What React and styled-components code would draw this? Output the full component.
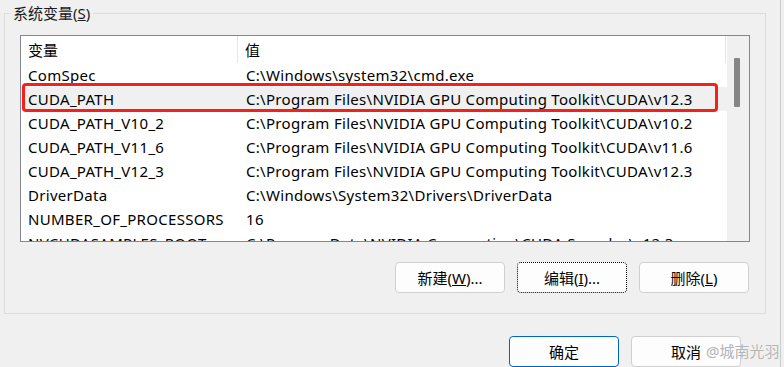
import React from "react";
import styled, { createGlobalStyle } from "styled-components";

const GlobalStyle = createGlobalStyle`
  html, body {
    margin: 0;
    padding: 0;
    background: #f0f0f0;
  }
  body {
    font-family: "Noto Sans", "Noto Sans CJK SC", sans-serif;
    font-size: 15px;
    color: #000;
  }
`;

const rows = [
  ["ComSpec", "C:\\Windows\\system32\\cmd.exe"],
  ["CUDA_PATH", "C:\\Program Files\\NVIDIA GPU Computing Toolkit\\CUDA\\v12.3", true],
  ["CUDA_PATH_V10_2", "C:\\Program Files\\NVIDIA GPU Computing Toolkit\\CUDA\\v10.2"],
  ["CUDA_PATH_V11_6", "C:\\Program Files\\NVIDIA GPU Computing Toolkit\\CUDA\\v11.6"],
  ["CUDA_PATH_V12_3", "C:\\Program Files\\NVIDIA GPU Computing Toolkit\\CUDA\\v12.3"],
  ["DriverData", "C:\\Windows\\System32\\Drivers\\DriverData"],
  ["NUMBER_OF_PROCESSORS", "16"],
  ["NVCUDASAMPLES_ROOT", "C:\\ProgramData\\NVIDIA Corporation\\CUDA Samples\\v12.3"],
];

function App() {
  return (
    <Window>
      <GlobalStyle />
      <Main>
        <GroupBox>
          <Legend>
            系统变量(<u>S</u>)
          </Legend>
          <ListBox>
            <ListBody>
              <HeaderRow>
                <HeadCell $width="217px">变量</HeadCell>
                <HeadCell $last>值</HeadCell>
              </HeaderRow>
              {rows.map(([name, value, selected]) => (
                <Row key={name} $selected={selected}>
                  <Cell $width="217px">{name}</Cell>
                  <Cell>{value}</Cell>
                </Row>
              ))}
              <Highlight />
            </ListBody>
            <ScrollTrack>
              <Thumb />
            </ScrollTrack>
          </ListBox>
          <ButtonRow>
            <Button>
              新建(<u>W</u>)...
            </Button>
            <Button $focused>
              编辑(<u>I</u>)...
            </Button>
            <Button>
              删除(<u>L</u>)
            </Button>
          </ButtonRow>
        </GroupBox>
        <DialogButtons>
          <Button $primary>确定</Button>
          <Button>取消</Button>
          <Watermark>@城南光羽</Watermark>
        </DialogButtons>
      </Main>
      <EdgeLine />
    </Window>
  );
}

//Styled Component
const Window = styled.div`
  width: 784px;
  height: 367px;
  display: flex;
  overflow: hidden;
`;

const Main = styled.div`
  width: 780px;
  padding: 3px 0 0 4px;
  box-sizing: border-box;
  position: relative;
`;

const EdgeLine = styled.div`
  width: 1px;
  background: #cbcbcb;
  margin-right: 3px;
`;

const GroupBox = styled.fieldset`
  width: 762px;
  box-sizing: border-box;
  margin: 0;
  padding: 0 14px 20px 15px;
  border: 1px solid #dcdcdc;
  min-width: 0;
`;

const Legend = styled.legend`
  margin-left: -10px;
  padding: 0 3px;
  line-height: 20px;
  color: #1a1a1a;
`;

const ListBox = styled.div`
  margin-top: 12px;
  width: 730px;
  height: 207px;
  box-sizing: border-box;
  border: 1px solid #828790;
  background: #fff;
  display: flex;
  overflow: hidden;
`;

const ListBody = styled.div`
  width: 706px;
  position: relative;
  overflow: hidden;
`;

const HeaderRow = styled.div`
  display: flex;
  height: 27px;
  align-items: center;
`;

const HeadCell = styled.div`
  width: ${(p) => p.$width || "auto"};
  flex: ${(p) => (p.$width ? "none" : "1")};
  height: 100%;
  display: flex;
  align-items: center;
  padding-left: 7px;
  box-sizing: border-box;
  border-right: 1px solid #e5e5e5;
  margin-right: ${(p) => (p.$last ? "1px" : "0")};
`;

const Row = styled.div`
  display: flex;
  height: 24px;
  align-items: center;
  background: ${(p) => (p.$selected ? "#f0f0f0" : "transparent")};
`;

const Cell = styled.div`
  width: ${(p) => (p.$width ? `calc(${p.$width} + 1px)` : "auto")};
  flex: ${(p) => (p.$width ? "none" : "1")};
  padding-left: 7px;
  box-sizing: border-box;
  white-space: nowrap;
  letter-spacing: 0.3px;
`;

const Highlight = styled.div`
  position: absolute;
  left: 1px;
  top: 47px;
  width: 696px;
  height: 29px;
  box-sizing: border-box;
  border: 3px solid #f5201a;
  border-radius: 4px;
`;

const ScrollTrack = styled.div`
  width: 22px;
  background: #f0f0f0;
`;

const Thumb = styled.div`
  margin: 22px 0 0 7px;
  width: 6px;
  height: 49px;
  background: #868686;
  border-radius: 1px;
`;

const ButtonRow = styled.div`
  display: flex;
  justify-content: flex-end;
  gap: 12px;
  margin: 20px 2px 0 0;
`;

const Button = styled.button`
  width: 110px;
  height: 31px;
  box-sizing: border-box;
  border-radius: 4px;
  background: #fdfdfd;
  border: 1px ${(p) => (p.$focused ? "dotted #000" : "solid")}
    ${(p) => (p.$primary ? "#0067c0" : p.$focused ? "" : "#d0d0d0")};
  font-family: inherit;
  font-size: 15px;
  color: #000;
  padding: 0;
`;

const DialogButtons = styled.div`
  display: flex;
  justify-content: flex-end;
  gap: 12px;
  margin: 22px 39px 0 0;
  position: relative;
`;

const Watermark = styled.span`
  position: absolute;
  left: 702px;
  top: 4px;
  font-size: 15px;
  color: #b4b4b4;
  text-shadow: 0 0 1px #fff;
  white-space: nowrap;
  pointer-events: none;
`;

export default App;
